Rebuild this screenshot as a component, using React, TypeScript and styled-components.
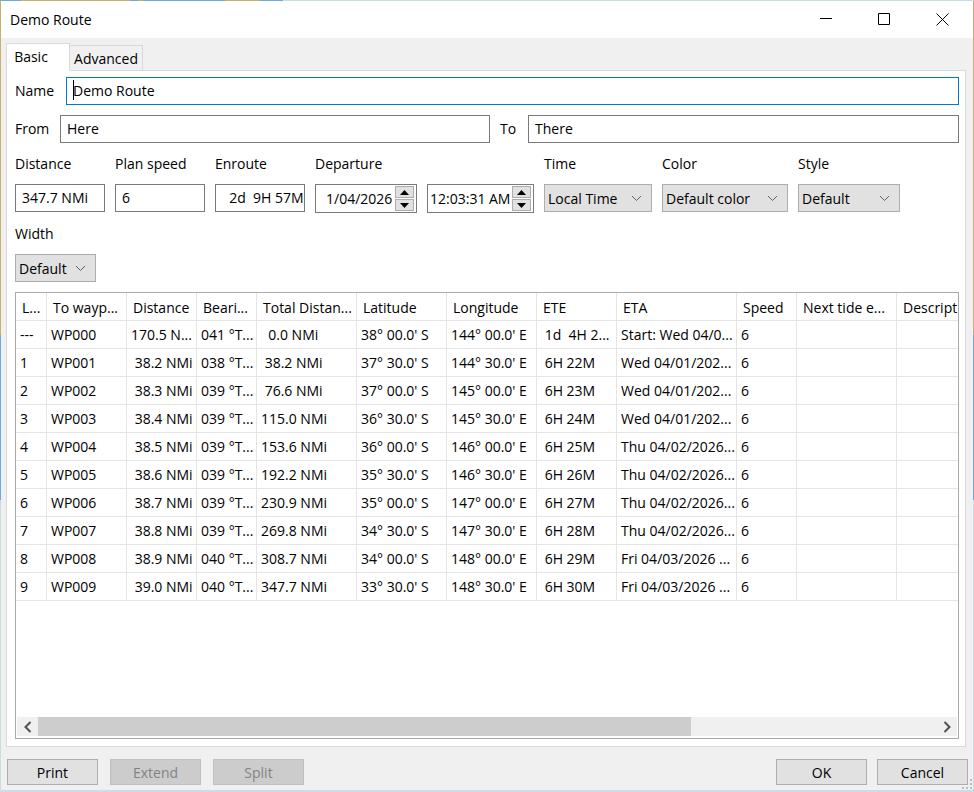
import React from 'react';
import styled, { createGlobalStyle } from 'styled-components';

const GlobalStyle = createGlobalStyle`
  html, body {
    margin: 0;
    padding: 0;
    background: #c9dde2;
  }
  body {
    font-family: 'Open Sans', 'Liberation Sans', sans-serif;
    font-size: 14px;
    color: #000;
  }
`;

const Window = styled.div`
  position: relative;
  box-sizing: border-box;
  display: flex;
  flex-direction: column;
  width: 974px;
  height: 792px;
  padding: 1px 1px 2px;
  background: linear-gradient(90deg, #6fa9dc 0 21px, #c8b06e 21px 130px, #6fa9dc 130px 138px, #c8b06e 138px 143px, #6fa9dc 143px 225px, #c8b06e 225px 260px, #6fa9dc 260px 283px, #c9dde2 283px) top / 100% 1px no-repeat,
    linear-gradient(180deg, #c8b06e 0 335px, #6fa9dc 335px 500px, #c9dde2 500px);
`;

const TitleBar = styled.div`
  display: flex;
  align-items: center;
  height: 37px;
  flex: none;
  padding: 0 1px 0 9px;
  background: #fff;
`;

const Title = styled.div`
  flex: 1;
`;

const WinButton = styled.div`
  box-sizing: border-box;
  display: flex;
  justify-content: center;
  width: 58px;
  height: 37px;
  padding-top: 12px;

  &:last-child {
    width: 59px;
  }
`;

const Body = styled.div`
  flex: 1;
  display: flex;
  flex-direction: column;
  min-height: 0;
  padding: 0 5px 0;
  background: #f0f0f0;
`;

const TabStrip = styled.div`
  display: flex;
  align-items: flex-end;
  height: 33px;
  flex: none;
  margin-bottom: -1px;
  position: relative;
  z-index: 1;
`;

const Tab = styled.div<{ $active?: boolean }>`
  box-sizing: border-box;
  display: flex;
  justify-content: center;
  align-items: ${p => (p.$active ? 'flex-start' : 'center')};
  height: ${p => (p.$active ? '28px' : '26px')};
  width: ${p => (p.$active ? '64px' : '73px')};
  padding-top: ${p => (p.$active ? '3px' : '1px')};
  padding-right: ${p => (p.$active ? '14px' : '0')};
  border: 1px solid #d9d9d9;
  border-bottom-color: ${p => (p.$active ? '#fff' : '#d9d9d9')};
  border-left-width: ${p => (p.$active ? '1px' : '0')};
  background: ${p => (p.$active ? '#fff' : '#f0f0f0')};
`;

const Pane = styled.div`
  box-sizing: border-box;
  display: flex;
  flex-direction: column;
  height: 677px;
  flex: none;
  width: 960px;
  padding: 6px 6px 7px 8px;
  background: #fff;
  border: 1px solid #d9d9d9;
`;

const FormRow = styled.div`
  display: flex;
  align-items: center;
  margin-bottom: 10px;
  flex: none;
`;

const InlineLabel = styled.span<{ $width: number; $indent?: number }>`
  box-sizing: border-box;
  width: ${p => p.$width}px;
  padding-left: ${p => p.$indent ?? 0}px;
  padding-bottom: 2px;
  flex: none;
`;

const TextBox = styled.div<{ $focused?: boolean; $width?: number }>`
  box-sizing: border-box;
  display: flex;
  align-items: center;
  height: 28px;
  ${p => (p.$width ? `width: ${p.$width}px; flex: none;` : 'flex: 1;')}
  padding: 0 6px 2px;
  background: #fff;
  border: 1px solid ${p => (p.$focused ? '#0078d7' : '#7a7a7a')};
  white-space: pre;
  overflow: hidden;
`;

const Caret = styled.span`
  display: inline-block;
  width: 1px;
  height: 20px;
  background: #000;
  margin-right: -1px;
`;

const FieldRow = styled.div`
  display: flex;
  gap: 10px;
  flex: none;
  margin-bottom: 10px;
`;

const Field = styled.div`
  display: flex;
  flex-direction: column;
`;

const FieldLabel = styled.div`
  height: 22px;
  line-height: 22px;
  margin-bottom: 9px;
`;

const DateGroup = styled.div`
  display: flex;
  gap: 10px;
`;

const SpinValue = styled.span`
  margin-top: -1px;
`;

const SpinBox = styled.div<{ $width: number; $pad: number }>`
  box-sizing: border-box;
  display: flex;
  align-items: center;
  justify-content: space-between;
  width: ${p => p.$width}px;
  height: 29px;
  padding: 0 2px 0 ${p => p.$pad}px;
  border: 1px solid #7a7a7a;
  white-space: nowrap;
`;

const SpinButtons = styled.div`
  display: flex;
  flex-direction: column;
  gap: 1px;
  flex: none;
`;

const SpinButton = styled.div`
  box-sizing: border-box;
  display: flex;
  align-items: center;
  justify-content: center;
  width: 19px;
  height: 12px;
  background: #e1e1e1;
  border: 1px solid #adadad;
`;

const Select = styled.div<{ $width: number }>`
  box-sizing: border-box;
  display: flex;
  align-items: center;
  justify-content: space-between;
  width: ${p => p.$width}px;
  height: 28px;
  padding: 0 9px 0 3px;
  background: #e1e1e1;
  border: 1px solid #adadad;
`;

const TableFrame = styled.div`
  flex: 1;
  min-height: 0;
  display: flex;
  flex-direction: column;
  border: 1px solid #a9a9a9;
  width: 944px;
  box-sizing: border-box;
  overflow: hidden;
`;

const TableViewport = styled.div`
  flex: 1;
  min-height: 0;
  overflow: hidden;
`;

const Grid = styled.table`
  border-collapse: separate;
  border-spacing: 0;
  table-layout: fixed;
  width: 942px;
`;

const HeaderCell = styled.th`
  box-sizing: border-box;
  height: 28px;
  padding: 2px 0 0 6px;
  font-weight: 400;
  text-align: left;
  white-space: pre;
  overflow: hidden;
  border-right: 1px solid #e5e5e5;
  border-bottom: 1px solid #e5e5e5;
`;

const Cell = styled.td`
  box-sizing: border-box;
  height: 28px;
  padding: 0 0 0 4px;
  text-align: left;
  white-space: pre;
  overflow: hidden;
  border-right: 1px solid #e5e5e5;
  border-bottom: 1px solid #e5e5e5;
`;

const ScrollBar = styled.div`
  display: flex;
  flex: none;
  height: 19px;
  margin: 0 1px 2px;
  background: #f0f0f0;
`;

const ScrollArrow = styled.div`
  display: flex;
  align-items: center;
  justify-content: center;
  width: 21px;
  flex: none;
`;

const ScrollThumb = styled.div`
  width: 653px;
  flex: none;
  background: #cdcdcd;
`;

const ScrollTrack = styled.div`
  flex: 1;
`;

const Footer = styled.div`
  display: flex;
  align-items: flex-start;
  flex: none;
  padding: 12px 0 0 1px;
  gap: 12px;
`;

const FooterButton = styled.div<{ $disabled?: boolean }>`
  box-sizing: border-box;
  display: flex;
  align-items: center;
  justify-content: center;
  width: 91px;
  height: 26px;
  background: ${p => (p.$disabled ? '#cccccc' : '#e1e1e1')};
  border: 1px solid ${p => (p.$disabled ? '#bfbfbf' : '#adadad')};
  color: ${p => (p.$disabled ? '#838383' : '#000')};
`;

const FooterSpacer = styled.div`
  flex: 1;
`;

const FooterRightGroup = styled.div`
  display: flex;
  gap: 10px;
`;

const Grip = styled.svg`
  position: absolute;
  right: 1px;
  bottom: 1px;
`;

const Chevron = () => (
  <svg width="11" height="7" viewBox="0 0 11 7" fill="none">
    <path d="M1 1l4.5 4.5L10 1" stroke="#5f5f5f" strokeWidth="1" />
  </svg>
);

const UpTriangle = () => (
  <svg width="9" height="5" viewBox="0 0 9 5">
    <path d="M4.5 0L9 5H0z" fill="#000" />
  </svg>
);

const DownTriangle = () => (
  <svg width="9" height="5" viewBox="0 0 9 5">
    <path d="M0 0h9L4.5 5z" fill="#000" />
  </svg>
);

const Spinner = () => (
  <SpinButtons>
    <SpinButton><UpTriangle /></SpinButton>
    <SpinButton><DownTriangle /></SpinButton>
  </SpinButtons>
);

const columns = [31, 80, 70, 60, 100, 90, 90, 80, 120, 60, 100, 100];
const headers = ['L...', 'To wayp...', 'Distance', 'Beari...', 'Total Distan...', 'Latitude', 'Longitude', 'ETE', 'ETA', 'Speed', 'Next tide e...', 'Descript'];

const rows = [
  ['---', 'WP000', '170.5 N...', '041 °T...', '  0.0 NMi', "38° 00.0' S", "144° 00.0' E", ' 1d  4H 2...', 'Start: Wed 04/0...', '6'],
  ['1', 'WP001', ' 38.2 NMi', '038 °T...', ' 38.2 NMi', "37° 30.0' S", "144° 30.0' E", ' 6H 22M', 'Wed 04/01/202...', '6'],
  ['2', 'WP002', ' 38.3 NMi', '039 °T...', ' 76.6 NMi', "37° 00.0' S", "145° 00.0' E", ' 6H 23M', 'Wed 04/01/202...', '6'],
  ['3', 'WP003', ' 38.4 NMi', '039 °T...', '115.0 NMi', "36° 30.0' S", "145° 30.0' E", ' 6H 24M', 'Wed 04/01/202...', '6'],
  ['4', 'WP004', ' 38.5 NMi', '039 °T...', '153.6 NMi', "36° 00.0' S", "146° 00.0' E", ' 6H 25M', 'Thu 04/02/2026...', '6'],
  ['5', 'WP005', ' 38.6 NMi', '039 °T...', '192.2 NMi', "35° 30.0' S", "146° 30.0' E", ' 6H 26M', 'Thu 04/02/2026...', '6'],
  ['6', 'WP006', ' 38.7 NMi', '039 °T...', '230.9 NMi', "35° 00.0' S", "147° 00.0' E", ' 6H 27M', 'Thu 04/02/2026...', '6'],
  ['7', 'WP007', ' 38.8 NMi', '039 °T...', '269.8 NMi', "34° 30.0' S", "147° 30.0' E", ' 6H 28M', 'Thu 04/02/2026...', '6'],
  ['8', 'WP008', ' 38.9 NMi', '040 °T...', '308.7 NMi', "34° 00.0' S", "148° 00.0' E", ' 6H 29M', 'Fri 04/03/2026 ...', '6'],
  ['9', 'WP009', ' 39.0 NMi', '040 °T...', '347.7 NMi', "33° 30.0' S", "148° 30.0' E", ' 6H 30M', 'Fri 04/03/2026 ...', '6'],
];

export default function App() {
  return (
    <Window>
      <GlobalStyle />
      <TitleBar>
        <Title>Demo Route</Title>
        <WinButton>
          <svg width="12" height="12" viewBox="0 0 12 12"><path d="M0 5.5h12" stroke="#000" /></svg>
        </WinButton>
        <WinButton>
          <svg width="12" height="12" viewBox="0 0 12 12" fill="none"><path d="M.5.5h11v11H.5z" stroke="#000" /></svg>
        </WinButton>
        <WinButton>
          <svg width="13" height="13" viewBox="0 0 13 13" fill="none"><path d="M.5.5l12 12M12.5.5l-12 12" stroke="#000" /></svg>
        </WinButton>
      </TitleBar>
      <Body>
        <TabStrip>
          <Tab $active>Basic</Tab>
          <Tab>Advanced</Tab>
        </TabStrip>
        <Pane>
          <FormRow>
            <InlineLabel $width={51}>Name</InlineLabel>
            <TextBox $focused><Caret />Demo Route</TextBox>
          </FormRow>
          <FormRow>
            <InlineLabel $width={45}>From</InlineLabel>
            <TextBox $width={430}>Here</TextBox>
            <InlineLabel $width={38} $indent={10}>To</InlineLabel>
            <TextBox $width={431}>There</TextBox>
          </FormRow>
          <FieldRow>
            <Field>
              <FieldLabel>Distance</FieldLabel>
              <TextBox $width={90}>347.7 NMi</TextBox>
            </Field>
            <Field>
              <FieldLabel>Plan speed</FieldLabel>
              <TextBox $width={90}>6</TextBox>
            </Field>
            <Field>
              <FieldLabel>Enroute</FieldLabel>
              <TextBox $width={90}>{'  2d  9H 57M'}</TextBox>
            </Field>
            <Field>
              <FieldLabel>Departure</FieldLabel>
              <DateGroup>
                <SpinBox $width={102} $pad={10}><SpinValue>1/04/2026</SpinValue><Spinner /></SpinBox>
                <SpinBox $width={107} $pad={2}><SpinValue>12:03:31 AM</SpinValue><Spinner /></SpinBox>
              </DateGroup>
            </Field>
            <Field>
              <FieldLabel>Time</FieldLabel>
              <Select $width={108}>Local Time<Chevron /></Select>
            </Field>
            <Field>
              <FieldLabel>Color</FieldLabel>
              <Select $width={126}>Default color<Chevron /></Select>
            </Field>
            <Field>
              <FieldLabel>Style</FieldLabel>
              <Select $width={102}>Default<Chevron /></Select>
            </Field>
          </FieldRow>
          <FieldRow>
            <Field>
              <FieldLabel>Width</FieldLabel>
              <Select $width={81}>Default<Chevron /></Select>
            </Field>
          </FieldRow>
          <TableFrame>
            <TableViewport>
              <Grid>
                <colgroup>
                  {columns.map((w, i) => <col key={i} style={{ width: w }} />)}
                </colgroup>
                <thead>
                  <tr>
                    {headers.map(h => <HeaderCell key={h}>{h}</HeaderCell>)}
                  </tr>
                </thead>
                <tbody>
                  {rows.map(row => (
                    <tr key={row[1]}>
                      {row.map((value, i) => <Cell key={i}>{value}</Cell>)}
                      <Cell />
                      <Cell />
                    </tr>
                  ))}
                </tbody>
              </Grid>
            </TableViewport>
            <ScrollBar>
              <ScrollArrow>
                <svg width="8" height="12" viewBox="0 0 8 12" fill="none"><path d="M6.5 1L1.5 6l5 5" stroke="#505050" strokeWidth="2" /></svg>
              </ScrollArrow>
              <ScrollThumb />
              <ScrollTrack />
              <ScrollArrow>
                <svg width="8" height="12" viewBox="0 0 8 12" fill="none"><path d="M1.5 1l5 5-5 5" stroke="#505050" strokeWidth="2" /></svg>
              </ScrollArrow>
            </ScrollBar>
          </TableFrame>
        </Pane>
        <Footer>
          <FooterButton>Print</FooterButton>
          <FooterButton $disabled>Extend</FooterButton>
          <FooterButton $disabled>Split</FooterButton>
          <FooterSpacer />
          <FooterRightGroup>
            <FooterButton>OK</FooterButton>
            <FooterButton>Cancel</FooterButton>
          </FooterRightGroup>
        </Footer>
      </Body>
      <Grip width="12" height="12" viewBox="0 0 12 12" fill="#bdbdbd">
        <path d="M9 0h2v2H9zM9 4h2v2H9zM1 8h2v2H1zM5 8h2v2H5zM9 8h2v2H9z" />
      </Grip>
    </Window>
  );
}
